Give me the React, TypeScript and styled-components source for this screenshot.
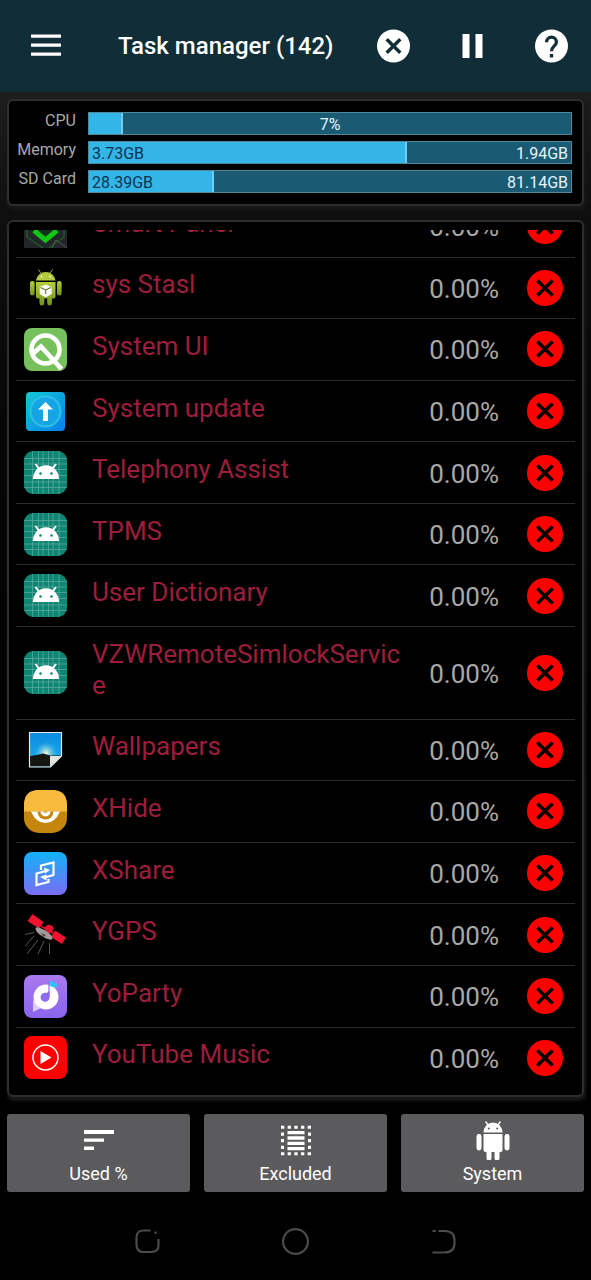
import React, { type ReactNode } from 'react';
import styled, { createGlobalStyle } from 'styled-components';

const GlobalStyle = createGlobalStyle`
  *, *::before, *::after { box-sizing: border-box; }
  body {
    margin: 0;
    background: #000;
    color: #fff;
    font-family: Roboto, "Noto Sans", sans-serif;
  }
  button {
    font: inherit;
    color: inherit;
    border: 0;
    padding: 0;
    background: none;
    cursor: pointer;
  }
  svg { display: block; }
`;

const Screen = styled.div`
  min-height: 100vh;
  display: flex;
  flex-direction: column;
`;

const Header = styled.header`
  flex: none;
  height: 92px;
  padding: 0 23px 0 30px;
  display: flex;
  align-items: center;
  background: #102d38;
`;

const Title = styled.h1`
  flex: 1;
  margin: 0 0 0 56px;
  font-size: 24px;
  line-height: 32px;
  font-weight: 500;
  white-space: nowrap;
`;

const HeaderActions = styled.div`
  display: flex;
  align-items: center;
  gap: 46px;
`;

const IconButton = styled.button`
  display: flex;
  align-items: center;
  justify-content: center;
`;

const Main = styled.main`
  flex: 1;
  display: flex;
  flex-direction: column;
  padding: 7px 7px 17px;
  background: linear-gradient(#1e1e1e, #0f0f0f 120px, #080808 300px, #000 700px);
`;

const Panel = styled.section`
  border: 2px solid #2e2e2e;
  border-radius: 6px;
  background: #000;
  box-shadow: 1px 3px 3px 1px #181818;
`;

const StatsPanel = styled(Panel)`
  display: grid;
  gap: 6px;
  padding: 11px 10px 11px 5px;
`;

const StatRow = styled.div`
  display: grid;
  grid-template-columns: 62px 1fr;
  column-gap: 12px;
`;

const StatLabel = styled.span`
  font-size: 16px;
  line-height: 18px;
  text-align: right;
  white-space: nowrap;
  color: #a9a9a9;
`;

const Meter = styled.div`
  position: relative;
  height: 23px;
  border: 1px solid #4f8a9c;
  background: #1b5a73;
`;

const MeterFill = styled.div`
  height: 100%;
  border-right: 2px solid #6fcdf0;
  background: #33b5e7;
`;

const MeterText = styled.div<{ $centered?: boolean }>`
  position: absolute;
  inset: 1px 3px 0;
  display: flex;
  justify-content: ${(p) => (p.$centered ? 'center' : 'space-between')};
  font-size: 16px;
  line-height: 22px;
  color: #e4f3f8;
`;

const UsedAmount = styled.span`
  color: #0c3350;
`;

const ListPanel = styled(Panel)`
  flex: 1;
  display: flex;
  margin-top: 14px;
  padding: 8px 7px 6px;
`;

const ListViewport = styled.div`
  flex: 1;
  display: flex;
  flex-direction: column;
  overflow: hidden;
`;

/* The list is scrolled so that its first row is partly out of view. */
const TaskList = styled.ul`
  flex: 1;
  display: flex;
  flex-direction: column;
  margin: -34px 0 0;
  padding: 0;
  list-style: none;
`;

const TaskRow = styled.li`
  flex: 1 0 auto;
  display: flex;
  align-items: center;
  padding: 8px 12px 8px 8px;
  border-bottom: 1px solid #2b2b2b;
  &:last-child { border-bottom-color: transparent; }
`;

const TaskName = styled.span`
  flex: 1;
  min-width: 0;
  margin-left: 25px;
  padding: 3px 0 9px;
  font-size: 26px;
  line-height: 31px;
  word-break: break-all;
  color: #9c1e3c;
`;

const TaskUsage = styled.span`
  width: 96px;
  font-size: 26px;
  line-height: 31px;
  padding-top: 3px;
  text-align: right;
  color: #a8a8a8;
`;

const KillButton = styled(IconButton)`
  margin-left: 28px;
`;

const Toolbar = styled.div`
  flex: none;
  display: grid;
  grid-template-columns: repeat(3, 1fr);
  gap: 14px;
  padding: 0 7px;
`;

const ToolButton = styled.button`
  height: 78px;
  display: flex;
  flex-direction: column;
  align-items: center;
  border-radius: 3px;
  background: #5b5b5d;
  font-size: 18px;
  line-height: 22px;
  padding-top: 6px;
  gap: 3px;
`;

const NavBar = styled.nav`
  flex: none;
  display: grid;
  grid-template-columns: repeat(3, 1fr);
  justify-items: center;
  padding: 36px 74px 25px;
`;

const AppIcon = styled.svg.attrs({ width: 43, height: 43, viewBox: '0 0 43 43', 'aria-hidden': true })`
  flex: none;
`;

const AppSvg = ({ children }: { children: ReactNode }) => <AppIcon>{children}</AppIcon>;

const MenuIcon = () => (
  <svg width="32" height="32" viewBox="0 0 32 32" stroke="#fff" strokeWidth="3.2" aria-hidden="true">
    <path d="M1 6.200h30M1 15.200h30M1 24.200h30" />
  </svg>
);

const CloseCircle = () => (
  <svg width="33" height="34" viewBox="0 0 33 34" aria-hidden="true">
    <circle cx="16.5" cy="17" r="16.5" fill="#fff" />
    <path d="M9.7 10.2l13.6 13.6M23.3 10.2L9.7 23.8" stroke="#102d38" strokeWidth="3.4" />
  </svg>
);

const PauseIcon = () => (
  <svg width="33" height="34" viewBox="0 0 33 34" fill="#fff" aria-hidden="true">
    <path d="M6.500 5h7v24h-7zM19.500 5h7v24h-7z" />
  </svg>
);

const HelpIcon = () => (
  <svg width="33" height="34" viewBox="0 0 33 34" aria-hidden="true">
    <circle cx="16.5" cy="17" r="16.5" fill="#fff" />
    <path d="M11.600 13.200a4.900 5 0 0 1 9.800 0c0 3.600-4.900 3.900-4.900 9" fill="none" stroke="#102d38" strokeWidth="3.2" />
    <path d="M14.800 25h3.400v3.400h-3.400z" fill="#102d38" />
  </svg>
);

const KillIcon = () => (
  <svg width="36" height="36" viewBox="0 0 36 36" aria-hidden="true">
    <circle cx="18" cy="18" r="18" fill="#fe0000" />
    <path d="M10.400 10.400l15.200 15.200M25.600 10.400L10.400 25.600" stroke="#000" strokeWidth="3.6" />
  </svg>
);

const SmartPanelIcon = () => (
  <AppSvg>
    <rect width="43" height="43" fill="#25262c" />
    <path d="M3 8v24l10 7M40 8v24l-10 7M13 39l6 4M30 39l-5 4" fill="none" stroke="#14781e" />
    <path d="M32 35l11 8M28 43l4-8" stroke="#4b5f55" fill="none" />
    <path d="M8 10v18l13.500 9.500L35 28V10" fill="#11331a" />
    <path d="M10 25.500l11.500 9.500L33 25.500" fill="none" stroke="#10c813" strokeWidth="5" />
  </AppSvg>
);

const StaslIcon = () => (
  <AppSvg>
    <defs>
      <linearGradient id="droid" x1="0" y1="0" x2="0" y2="1">
        <stop offset="0" stopColor="#b5cf3b" />
        <stop offset="1" stopColor="#718f1c" />
      </linearGradient>
    </defs>
    <path d="M14.500 3.500l2.500 4M28.500 3.500l-2.500 4" stroke="#93a82e" strokeWidth="1" />
    <path d="M12 14.500a9.800 9.500 0 0 1 19.500 0z" fill="#b3ca40" />
    <circle cx="17.500" cy="10.500" r=".9" fill="#eef5c8" />
    <circle cx="26" cy="10.500" r=".9" fill="#eef5c8" />
    <path d="M12 16h19.500v14.500q0 2-2 2H28V37q0 2.500-2.400 2.500T23.200 37v-4.500h-2.900V37q0 2.500-2.400 2.500T15.500 37v-4.500H14q-2 0-2-2z" fill="url(#droid)" />
    <rect x="6" y="15" width="4.600" height="14.500" rx="2.300" fill="url(#droid)" />
    <rect x="33" y="15" width="4.600" height="14.500" rx="2.300" fill="url(#droid)" />
    <path d="M21.700 18.500l6 2.500v7l-6 3.500-6-3.500v-7z" fill="#fafaf4" />
    <path d="M16.500 21.500l5.200 2.500 5.200-2.500M21.700 24v4" fill="none" stroke="#6a7440" strokeWidth="1.100" />
  </AppSvg>
);

const SystemUiIcon = () => (
  <AppSvg>
    <rect width="43" height="43" rx="8" fill="#76c15c" />
    <circle cx="21.500" cy="21.500" r="14" fill="none" stroke="#fff" strokeWidth="4.600" />
    <path d="M8.500 26l8.500-7.500L37.500 41" fill="none" stroke="#fff" strokeWidth="4.800" />
  </AppSvg>
);

const UpdateIcon = () => (
  <AppSvg>
    <defs>
      <linearGradient id="update" x1="0" y1="0" x2="1" y2="1">
        <stop offset="0" stopColor="#12c8d4" />
        <stop offset="1" stopColor="#087fec" />
      </linearGradient>
    </defs>
    <rect x="2" y="2" width="39" height="39" rx="4" fill="url(#update)" />
    <circle cx="21.500" cy="21.500" r="15" fill="#16a5e4" stroke="#2fc0ea" strokeWidth="2" />
    <path d="M21.500 12l7.500 7.500h-5V31h-5V19.500h-5z" fill="#fff" />
  </AppSvg>
);

const DroidGridIcon = () => (
  <AppSvg>
    <rect width="43" height="43" rx="9" fill="#0f8673" />
    <path d="M8.500 0v43M14.500 0v43M19 0v43M24.500 0v43M29 0v43M35 0v43M0 7.500h43M0 13h43M0 18.500h43M0 24.500h43M0 31h43M0 36.500h43" stroke="#5fae9f" strokeWidth=".7" />
    <path d="M9 28a12.800 13.500 0 0 1 26 0z" fill="#fff" />
    <path d="M11.500 13l4 5.500M32 13l-4 5.500" stroke="#fff" strokeWidth="2" />
    <circle cx="16.500" cy="22.500" r="1.300" fill="#0f8673" />
    <circle cx="27.500" cy="22.500" r="1.300" fill="#0f8673" />
  </AppSvg>
);

const WallpapersIcon = () => (
  <AppSvg>
    <defs>
      <linearGradient id="sky" x1="0" y1="0" x2="0" y2="1">
        <stop offset="0" stopColor="#0a8be0" />
        <stop offset="1" stopColor="#23b0ee" />
      </linearGradient>
      <radialGradient id="sun">
        <stop offset="0" stopColor="#f4f6cf" />
        <stop offset="1" stopColor="#5fd0ee" stopOpacity="0" />
      </radialGradient>
    </defs>
    <path d="M5.500 4.500h32V28L26.500 39h-21z" fill="url(#sky)" />
    <circle cx="22" cy="25" r="11" fill="url(#sun)" />
    <path d="M6 28l7-1 6-1.500 7 2h11l-10.500 11H6z" fill="#14160f" />
    <path d="M5.500 4.500h32V28L26.500 39h-21z" fill="none" stroke="#e3e7ea" strokeWidth="1.200" />
    <path d="M26 28h11.500L26 39z" fill="#e4e4df" />
  </AppSvg>
);

const XHideIcon = () => (
  <AppSvg>
    <rect width="43" height="43" rx="15" fill="#c4860e" />
    <path d="M0 21.500V15Q0 0 15 0h13q15 0 15 15v6.500z" fill="#f8bb3e" />
    <path d="M7 21.500q5 11.500 14.500 11.500T36 21.500z" fill="#fff" />
    <path d="M13.500 21.500a8 8 0 0 0 16 0z" fill="#c4860e" />
    <path d="M16.500 21.500a5 5 0 0 0 10 0h-2.500q-2.500 2.500-5 0z" fill="#fff" />
  </AppSvg>
);

const XShareIcon = () => (
  <AppSvg>
    <defs>
      <linearGradient id="share" x1="0" y1="0" x2="0" y2="1">
        <stop offset="0" stopColor="#12b2f8" />
        <stop offset="1" stopColor="#7a6cf4" />
      </linearGradient>
    </defs>
    <rect width="43" height="43" rx="8" fill="url(#share)" />
    <g fill="none" stroke="#fff" strokeWidth="2.200">
      <path d="M17 18v-4.500l12.500-3V23L21 25.500" />
      <path d="M24.500 27v3L12.500 33V21.500L21.500 19" />
    </g>
    <path d="M20 15.500l6 2.500-5 3.500zM22.500 22.500v6L16 25z" fill="#fff" />
  </AppSvg>
);

const SatelliteIcon = () => (
  <AppSvg>
    <path d="M10 19.500L1 21.500M10 23L1 33M14 27L3 41M20 28l-6 13M25.500 30v11" stroke="#56565c" strokeWidth="1" fill="none" />
    <path d="M8.500 1l11 8-4.500 6.500L3.500 8zM31 17.500l11 7-4 6.500-11-7z" fill="#f01330" />
    <path d="M17 13l13 8" stroke="#d00f28" strokeWidth="2" />
    <path d="M20 15q3.500-5 7.500-2.500T28 19l-4 2z" fill="#e81230" />
    <ellipse cx="20" cy="20.500" rx="10" ry="3.400" transform="rotate(33 20 20.500)" fill="#a19a9a" />
    <path d="M17 20l2.500 4 2.500-2z" fill="#57484a" />
  </AppSvg>
);

const YoPartyIcon = () => (
  <AppSvg>
    <defs>
      <linearGradient id="party" x1="0" y1="0" x2="0" y2="1">
        <stop offset="0" stopColor="#a979f0" />
        <stop offset="1" stopColor="#8a65ec" />
      </linearGradient>
    </defs>
    <rect width="43" height="43" rx="8" fill="url(#party)" />
    <path d="M9 25v12l8-4z" fill="#d9caf9" />
    <circle cx="22" cy="22" r="12.500" fill="#fff" />
    <path d="M25 6v16" stroke="#8f6bed" strokeWidth="1.200" />
    <path d="M25.500 5.500l8.500 3.500-1.500 4-7-2z" fill="#2fc4f4" />
    <path d="M25.500 16v7a4.500 4.500 0 1 1-3-5" fill="#8f6bed" />
  </AppSvg>
);

const YouTubeMusicIcon = () => (
  <AppSvg>
    <rect width="43" height="43" rx="8" fill="#fe0000" />
    <circle cx="21.500" cy="21.500" r="12.500" fill="none" stroke="#fff" strokeWidth="1.500" />
    <path d="M16.500 15l11 6.500-11 6.500z" fill="#fff" />
  </AppSvg>
);

const SortIcon = () => (
  <svg width="40" height="40" viewBox="0 0 40 40" fill="#fff" aria-hidden="true">
    <path d="M5 10h30v4H5zM5 18.500h20v3.300H5zM5 26.500h10v3.500H5z" />
  </svg>
);

const ExcludedIcon = () => (
  <svg width="40" height="40" viewBox="0 0 40 40" fill="none" stroke="#fff" aria-hidden="true">
    <path d="M5 7.300h30M5 33.800h30" strokeWidth="3" strokeDasharray="3.300 3.370" />
    <path d="M6.500 12.400v18M33.500 12.400v18" strokeWidth="3" strokeDasharray="3.300 3.370" />
    <path d="M11.500 12.700h17M11.500 18h17M11.500 23.300h17M11.500 28.600h17" strokeWidth="3.300" />
  </svg>
);

const SystemIcon = () => (
  <svg width="40" height="40" viewBox="0 0 40 40" fill="#fff" aria-hidden="true">
    <path d="M12.500 1.500l3 4M27.500 1.500l-3 4" stroke="#fff" strokeWidth="1.400" />
    <path d="M10.500 12.500a9.500 10 0 0 1 19 0z" />
    <path d="M10.500 14h19v16q0 2-2 2h-1v6a2.500 2.500 0 0 1-5 0v-6h-3v6a2.500 2.500 0 0 1-5 0v-6h-1q-2 0-2-2z" />
    <rect x="3.500" y="14" width="5" height="16.500" rx="2.400" />
    <rect x="31.500" y="14" width="5" height="16.500" rx="2.400" />
    <circle cx="15.800" cy="8.500" r="1" fill="#5b5b5d" />
    <circle cx="24.200" cy="8.500" r="1" fill="#5b5b5d" />
  </svg>
);

const NavSvg = styled.svg.attrs({ width: 27, height: 27, viewBox: '0 0 27 27', 'aria-hidden': true })`
  fill: none;
  stroke: #4b4b4b;
  stroke-width: 2.2;
`;

const RecentsIcon = () => (
  <NavSvg>
    <path d="M16.500 2.500H9.500Q2.500 2.500 2.500 9.500v7q0 7.500 7 7.500h8q7 0 7-7V11" />
    <path d="M21.500 3.500v2.500" />
  </NavSvg>
);

const HomeIcon = () => (
  <NavSvg>
    <circle cx="13.500" cy="13.500" r="12.400" />
  </NavSvg>
);

const BackIcon = () => (
  <NavSvg>
    <path d="M8.500 3h6q10 0 10 9v3q0 9.500-10 9.500H2.500" />
    <path d="M2.500 3h3.300" />
  </NavSvg>
);

interface Task {
  name: string;
  Icon: () => React.JSX.Element;
}

const tasks: Task[] = [
  { name: 'Smart Panel', Icon: SmartPanelIcon },
  { name: 'sys Stasl', Icon: StaslIcon },
  { name: 'System UI', Icon: SystemUiIcon },
  { name: 'System update', Icon: UpdateIcon },
  { name: 'Telephony Assist', Icon: DroidGridIcon },
  { name: 'TPMS', Icon: DroidGridIcon },
  { name: 'User Dictionary', Icon: DroidGridIcon },
  { name: 'VZWRemoteSimlockService', Icon: DroidGridIcon },
  { name: 'Wallpapers', Icon: WallpapersIcon },
  { name: 'XHide', Icon: XHideIcon },
  { name: 'XShare', Icon: XShareIcon },
  { name: 'YGPS', Icon: SatelliteIcon },
  { name: 'YoParty', Icon: YoPartyIcon },
  { name: 'YouTube Music', Icon: YouTubeMusicIcon },
];

interface Stat {
  id: string;
  label: string;
  percent: number;
  used?: string;
  free?: string;
}

const stats: Stat[] = [
  { id: 'cpu', label: 'CPU', percent: 7 },
  { id: 'memory', label: 'Memory', percent: 66, used: '3.73GB', free: '1.94GB' },
  { id: 'sd', label: 'SD Card', percent: 26, used: '28.39GB', free: '81.14GB' },
];

export default function App() {
  return (
    <>
      <GlobalStyle />
      <Screen>
        <Header>
          <IconButton aria-label="Menu"><MenuIcon /></IconButton>
          <Title>Task manager (142)</Title>
          <HeaderActions>
            <IconButton aria-label="Close all"><CloseCircle /></IconButton>
            <IconButton aria-label="Pause"><PauseIcon /></IconButton>
            <IconButton aria-label="Help"><HelpIcon /></IconButton>
          </HeaderActions>
        </Header>
        <Main>
          <StatsPanel>
            {stats.map((s) => (
              <StatRow key={s.id}>
                <StatLabel id={s.id}>{s.label}</StatLabel>
                <Meter role="meter" aria-labelledby={s.id} aria-valuenow={s.percent}>
                  <MeterFill style={{ width: `${s.percent}%` }} />
                  <MeterText $centered={!s.used}>
                    {s.used ? (
                      <>
                        <UsedAmount>{s.used}</UsedAmount>
                        <span>{s.free}</span>
                      </>
                    ) : (
                      <span>{s.percent}%</span>
                    )}
                  </MeterText>
                </Meter>
              </StatRow>
            ))}
          </StatsPanel>
          <ListPanel>
            <ListViewport>
              <TaskList>
                {tasks.map(({ name, Icon }) => (
                  <TaskRow key={name}>
                    <Icon />
                    <TaskName>{name}</TaskName>
                    <TaskUsage>0.00%</TaskUsage>
                    <KillButton aria-label={`Stop ${name}`}><KillIcon /></KillButton>
                  </TaskRow>
                ))}
              </TaskList>
            </ListViewport>
          </ListPanel>
        </Main>
        <Toolbar>
          <ToolButton><SortIcon />Used %</ToolButton>
          <ToolButton><ExcludedIcon />Excluded</ToolButton>
          <ToolButton><SystemIcon />System</ToolButton>
        </Toolbar>
        <NavBar>
          <IconButton aria-label="Recent apps"><RecentsIcon /></IconButton>
          <IconButton aria-label="Home"><HomeIcon /></IconButton>
          <IconButton aria-label="Back"><BackIcon /></IconButton>
        </NavBar>
      </Screen>
    </>
  );
}
